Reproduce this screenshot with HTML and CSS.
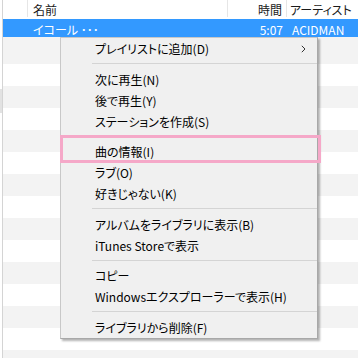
FILE: index.html
```html
<!DOCTYPE html>
<html lang="ja">
<head>
<meta charset="utf-8">
<link rel="stylesheet" href="styles.css">
</head>
<body>
<div class="window">
  <div class="edge"><div class="edge-grip"></div></div>
  <div class="list">
    <div class="row header">
      <span class="cell c-blank"></span>
      <span class="cell c-name">名前</span>
      <span class="cell c-time">時間</span>
      <span class="cell c-artist">アーティスト</span>
    </div>
    <div class="row selected">
      <span class="cell c-blank"></span>
      <span class="cell c-name">イコール ･･･</span>
      <span class="cell c-time">5:07</span>
      <span class="cell c-artist">ACIDMAN</span>
    </div>
    <div class="row stripe first"></div>
    <div class="row"></div>
    <div class="row stripe"></div>
    <div class="row"></div>
    <div class="row stripe"></div>
    <div class="row"></div>
    <div class="row stripe"></div>
    <div class="row"></div>
    <div class="row stripe"></div>
    <div class="row"></div>
    <div class="row stripe"></div>
    <div class="row"></div>
    <div class="row stripe"></div>
    <div class="row"></div>
    <div class="row stripe"></div>
  </div>

  <div class="menu">
    <div class="item"><span>プレイリストに追加(D)</span><svg class="chev" width="5" height="8" viewBox="0 0 5 8"><path d="M0.8 0.8 L4 4 L0.8 7.2" fill="none" stroke="#333" stroke-width="1"/></svg></div>
    <div class="sep"></div>
    <div class="item">次に再生(N)</div>
    <div class="item">後で再生(Y)</div>
    <div class="item">ステーションを作成(S)</div>
    <div class="sep"></div>
    <div class="item">曲の情報(I)</div>
    <div class="item">ラブ(O)</div>
    <div class="item">好きじゃない(K)</div>
    <div class="sep"></div>
    <div class="item">アルバムをライブラリに表示(B)</div>
    <div class="item">iTunes Storeで表示</div>
    <div class="sep"></div>
    <div class="item">コピー</div>
    <div class="item">Windowsエクスプローラーで表示(H)</div>
    <div class="sep"></div>
    <div class="item">ライブラリから削除(F)</div>
    <div class="highlight"></div>
  </div>
</div>
</body>
</html>
```

FILE: styles.css
```css
html, body {
  margin: 0;
  padding: 0;
  background: #ffffff;
}

body {
  width: 358px;
  height: 358px;
  overflow: hidden;
  font-family: "Noto Sans CJK JP", "Noto Sans", sans-serif;
  font-size: 12px;
  font-feature-settings: "palt";
  color: #000;
}

.window {
  position: relative;
  display: flex;
  width: 358px;
  height: 358px;
  overflow: hidden;
}

.edge {
  width: 2px;
  flex: none;
}

.edge-grip {
  margin-top: 89px;
  height: 24px;
  background: #e2e2e2;
}

.list {
  flex: 1;
  border-left: 1px solid #d4d4d4;
  display: flex;
  flex-direction: column;
}

.row {
  flex: none;
  height: 22px;
  display: grid;
  grid-template-columns: 25px 200px 59px 1fr;
}

.row.stripe {
  background: #f3f3f3;
}

.row.first {
  height: 27px;
}

.cell {
  white-space: nowrap;
  box-sizing: border-box;
}

.header {
  height: 19px;
  color: #1a1a1a;
}

.header .cell {
  height: 17px;
  padding-top: 2px;
  line-height: 16px;
}

.header .c-blank,
.header .c-name,
.header .c-time {
  border-right: 1px solid #e6e6e6;
}

.c-name {
  padding-left: 5px;
}

.c-time {
  text-align: right;
  padding-right: 4px;
}

.c-artist {
  padding-left: 3px;
}

.selected {
  height: 18px;
  background: #3399ff;
  color: #ffffff;
}

.selected .cell {
  height: 18px;
  padding-top: 4px;
  line-height: 14px;
}

.selected .c-artist {
  padding-left: 5px;
}

/* context menu */
.menu {
  position: absolute;
  left: 60px;
  top: 37px;
  width: 256px;
  background: #f0f0f0;
  border: 1px solid #c8c8c8;
  border-right-color: #a8a8a8;
  border-bottom-color: #a8a8a8;
  box-shadow: 2px 2px 2px rgba(0, 0, 0, 0.3);
  display: flex;
  flex-direction: column;
}

.item {
  height: 21px;
  line-height: 21px;
  padding-left: 34px;
  padding-right: 11px;
  display: flex;
  justify-content: space-between;
  align-items: center;
  white-space: nowrap;
}

.chev {
  display: block;
}

.sep {
  height: 9.5px;
  display: flex;
  align-items: center;
  padding-left: 31px;
}

.sep::after {
  content: "";
  flex: 1;
  height: 1px;
  background: #d4d4d4;
}

.highlight {
  position: absolute;
  left: -1px;
  top: 97px;
  width: 261px;
  height: 28px;
  box-sizing: border-box;
  border: 3px solid #f5a8c8;
}
```
